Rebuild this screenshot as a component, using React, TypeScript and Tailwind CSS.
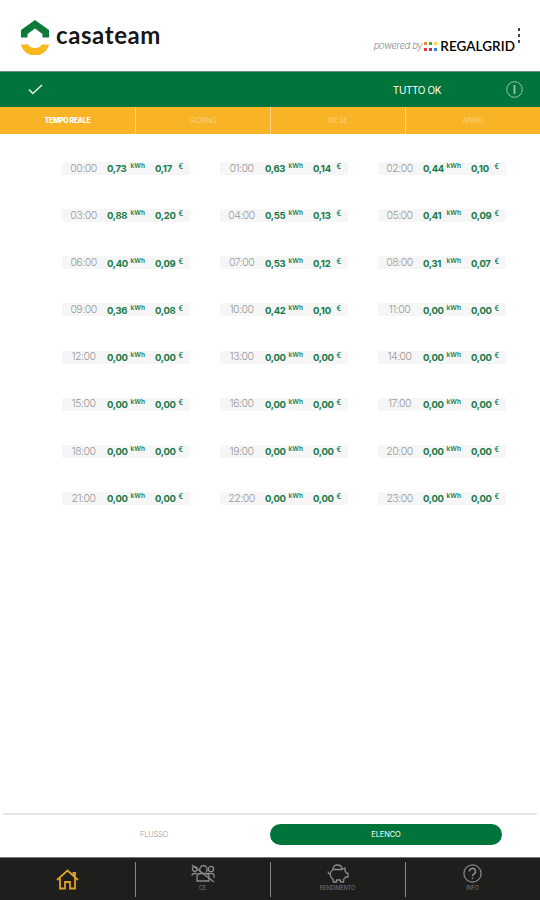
import clsx from "clsx";

const hours = [
  { time: "00:00", energy: "0,73", cost: "0,17" },
  { time: "01:00", energy: "0,63", cost: "0,14" },
  { time: "02:00", energy: "0,44", cost: "0,10" },
  { time: "03:00", energy: "0,88", cost: "0,20" },
  { time: "04:00", energy: "0,55", cost: "0,13" },
  { time: "05:00", energy: "0,41", cost: "0,09" },
  { time: "06:00", energy: "0,40", cost: "0,09" },
  { time: "07:00", energy: "0,53", cost: "0,12" },
  { time: "08:00", energy: "0,31", cost: "0,07" },
  { time: "09:00", energy: "0,36", cost: "0,08" },
  { time: "10:00", energy: "0,42", cost: "0,10" },
  { time: "11:00", energy: "0,00", cost: "0,00" },
  { time: "12:00", energy: "0,00", cost: "0,00" },
  { time: "13:00", energy: "0,00", cost: "0,00" },
  { time: "14:00", energy: "0,00", cost: "0,00" },
  { time: "15:00", energy: "0,00", cost: "0,00" },
  { time: "16:00", energy: "0,00", cost: "0,00" },
  { time: "17:00", energy: "0,00", cost: "0,00" },
  { time: "18:00", energy: "0,00", cost: "0,00" },
  { time: "19:00", energy: "0,00", cost: "0,00" },
  { time: "20:00", energy: "0,00", cost: "0,00" },
  { time: "21:00", energy: "0,00", cost: "0,00" },
  { time: "22:00", energy: "0,00", cost: "0,00" },
  { time: "23:00", energy: "0,00", cost: "0,00" },
];

const tabs = ["TEMPO REALE", "GIORNO", "MESE", "ANNO"];

function Logo() {
  return (
    <svg className="w-7 h-[35px]" viewBox="0 0 28 35" fill="none">
      <path d="M0 17.500V10L14 0l14 10v7.500h-6.500V14L14 8.500 6.500 14v3.500Z" fill="#0b7a3b" />
      <path d="M0 24.500h7q2.500 3.500 7 3.500t7-3.500h7C26.500 31 21 35.500 14 35.500S1.500 31 0 24.500Z" fill="#f9b720" />
    </svg>
  );
}

function GridDots() {
  const colors = ["bg-[#f08a24]", "bg-[#35a853]", "bg-[#f5dc3c]", "bg-[#e23b3b]", "bg-[#c22b5c]", "bg-[#2f86c9]"];
  return (
    <div className="grid grid-cols-3 gap-x-[2px] gap-y-[3px]">
      {colors.map((c) => (
        <span key={c} className={clsx("size-[3px]", c)}></span>
      ))}
    </div>
  );
}

function HomeIcon() {
  return (
    <svg className="w-[23px] h-[21px]" viewBox="0 0 23 21" fill="none" stroke="#dfa127" strokeWidth="1.8">
      <path d="M1 11 11.500 1.500 22 11M17.500 6.500V4H19v4" />
      <path d="M4 9v10.500h5V13h5v6.500h5V9" />
    </svg>
  );
}

function CommunityIcon() {
  return (
    <svg className="w-6 h-[19px]" viewBox="0 0 24 19" fill="none" stroke="currentColor" strokeWidth="1.300">
      <circle cx="3.800" cy="5" r="2.400" />
      <path d="M9.500 8.500Q8.200 6 9 4q1.200-2.500 3.500-2.500T16 4q.7 2.500-.7 4.500" />
      <circle cx="20" cy="5" r="2.600" />
      <path d="M1 11.500q0-2 2.500-2H6M23 14v-2.500q0-2-2.500-2H17M6 17v-4q0-3.500 3.500-3.500h5Q18 9.500 18 13v4Z" />
      <path d="M1 1l22 17" strokeWidth="1.500" />
    </svg>
  );
}

function PiggyIcon() {
  return (
    <svg className="w-[22px] h-[19px]" viewBox="0 0 22 19" fill="none" stroke="currentColor" strokeWidth="1.300" strokeLinejoin="round">
      <path d="M6 5.500Q6 1 10.500 1T15 5.500Z" />
      <path d="M6 5.500Q3.500 7 3.200 10.500q.3 3 3 5V18h3.300v-2h4v2h3.200v-2.800l2-2.200H21V9.200h-1.600L18 6.800v-3l-3 1.700M3.200 10Q1 9.500 1 7.500" />
    </svg>
  );
}

function HelpIcon() {
  return (
    <svg className="size-[19px]" viewBox="0 0 19 19" fill="none" stroke="currentColor" strokeWidth="1.200">
      <circle cx="9.500" cy="9.500" r="8.600" />
      <path d="M6.500 7.500a3 3 0 1 1 4.500 2.500q-1.500.8-1.500 2.200M9.500 13.400v1.600" strokeWidth="1.500" />
    </svg>
  );
}

function HourItem({ time, energy, cost }: { time: string; energy: string; cost: string }) {
  return (
    <div className="flex items-center h-[13px] pl-2 pt-px bg-[#f6f6f6] rounded-xs leading-none whitespace-nowrap">
      <span className="w-[27px] text-center text-[10.500px] font-light tracking-[-0.500px] text-[#999]">{time}</span>
      <span className="w-[38px] ml-[10px] flex text-[9.500px] font-bold tracking-[-0.300px] text-[#1a7a48]">
        {energy}
        <sup className="ml-auto top-0 leading-none mt-[-1px] text-[6.500px] font-semibold tracking-[0.100px]">kWh</sup>
      </span>
      <span className="w-[28px] ml-[10px] flex text-[9.500px] font-bold tracking-[-0.300px] text-[#1a7a48]">
        {cost}
        <sup className="ml-auto top-0 leading-none mt-[-1px] text-[7px] font-semibold">€</sup>
      </span>
    </div>
  );
}

export default function App() {
  return (
    <div className="w-[540px] h-[900px] flex flex-col overflow-hidden bg-white font-['Inter',sans-serif]">
      {/* Header */}
      <header className="h-[71px] shrink-0 flex justify-between pl-[21px] pr-5">
        <div className="flex items-start gap-[7px] pt-5">
          <Logo />
          <span className="mt-[2px] text-[24px] leading-[26px] font-bold tracking-[0.600px] text-[#171717] font-['Lato',sans-serif]">
            casateam
          </span>
        </div>
        <div className="flex items-start">
          <div className="flex items-center pt-[38px]">
            <span className="mr-[2px] text-[9.500px] leading-4 tracking-[-0.350px] italic font-light text-[#888]">powered by</span>
            <GridDots />
            <span className="ml-[3px] text-[13.500px] leading-4 font-semibold tracking-[0.050px] text-black font-['Lato',sans-serif]">
              REGALGRID
            </span>
          </div>
          <div className="flex flex-col gap-[3px] pt-[28px] ml-[3px]">
            <span className="w-[2px] h-[3px] bg-[#444]"></span>
            <span className="w-[2px] h-[3px] bg-[#444]"></span>
            <span className="w-[2px] h-[3px] bg-[#444]"></span>
          </div>
        </div>
      </header>

      {/* Status bar */}
      <div className="h-9 shrink-0 flex items-center bg-[#00743a] border-t border-[#6f8c7c] pl-7 pr-[17px]">
        <svg className="w-[15px] h-[11px]" viewBox="0 0 15 11" fill="none" stroke="#e6f2e9" strokeWidth="1.500">
          <path d="M1 5.500 4.800 9.500 14 1" />
        </svg>
        <span className="ml-auto pt-px text-[10px] tracking-[-0.400px] text-white">TUTTO OK</span>
        <svg className="size-[17px] ml-[65px] -mt-px" viewBox="0 0 17 17" fill="none" stroke="#94c7a8" strokeWidth="1">
          <circle cx="8.500" cy="8.500" r="7.800" />
          <path d="M8.500 4v9" strokeWidth="1.800" />
        </svg>
      </div>

      {/* Period tabs */}
      <div className="h-[27px] shrink-0 grid grid-cols-4 bg-[#f8b327]">
        {tabs.map((tab, i) => (
          <div
            key={tab}
            className={clsx(
              "flex items-center justify-center pt-[2px] text-[7px]",
              i > 0 && "border-l border-[#fbd68a]",
              i === 0 ? "font-extrabold tracking-[-0.350px] text-white" : "text-[#fbd07c]"
            )}
          >
            {tab}
          </div>
        ))}
      </div>

      {/* Hourly list */}
      <main className="flex-1 pt-7">
        <div className="w-[444px] ml-[62px] grid grid-cols-3 gap-x-[30px] gap-y-[34.150px]">
          {hours.map((h) => (
            <HourItem key={h.time} {...h} />
          ))}
        </div>
      </main>

      {/* View switch */}
      <div className="h-11 shrink-0 mx-[3px] border-t-2 border-[#e8e8e8] flex items-start pt-[9px]">
        <div className="w-[232px] ml-[35px] h-[21px] flex items-center justify-center text-[7.500px] tracking-[-0.200px] font-light text-[#999]">FLUSSO</div>
        <div className="w-[232px] h-[21px] rounded-full bg-[#00743a] flex items-center justify-center text-[7.500px] tracking-[-0.100px] text-white">
          ELENCO
        </div>
      </div>

      {/* Bottom navigation */}
      <nav className="h-[43px] shrink-0 grid grid-cols-4 bg-[#1e1e1d] border-t border-[#777] text-[#8a8a8a]">
        <div className="flex items-center justify-center">
          <HomeIcon />
        </div>
        {[
          { label: "CE", icon: <CommunityIcon /> },
          { label: "RENDIMENTO", icon: <PiggyIcon /> },
          { label: "INFO", icon: <HelpIcon /> },
        ].map((item) => (
          <div key={item.label} className="relative flex flex-col items-center pt-[6px]">
            <span className="absolute left-0 top-[4px] h-[35px] w-px bg-[#888]"></span>
            {item.icon}
            <span className="mt-[2px] text-[5.500px] leading-[6px] tracking-[-0.100px] text-[#777]">{item.label}</span>
          </div>
        ))}
      </nav>
    </div>
  );
}
